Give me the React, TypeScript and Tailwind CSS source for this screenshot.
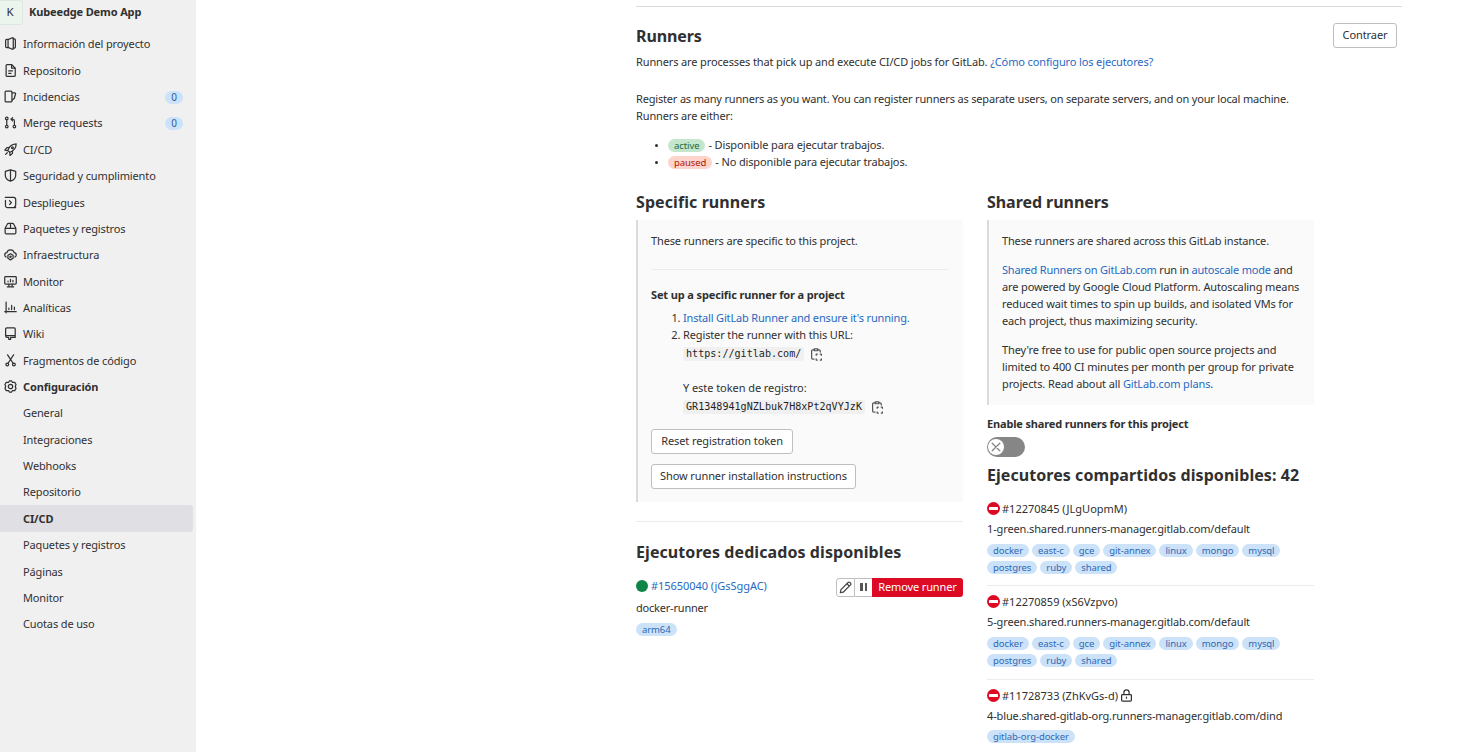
import React, { ReactNode } from "react";

function Icon({ children, className = "size-[13px]" }: { children: ReactNode; className?: string }) {
  return (
    <svg
      viewBox="0 0 16 16"
      className={`shrink-0 ${className}`}
      fill="none"
      stroke="currentColor"
      strokeWidth="1.5"
      strokeLinecap="round"
      strokeLinejoin="round"
    >
      {children}
    </svg>
  );
}

const icons = {
  project: (
    <>
      <path d="M5 3H3.2A1.2 1.2 0 0 0 2 4.2v7.6A1.2 1.2 0 0 0 3.2 13H5M11.400 2.400h1.400A1.200 1.200 0 0 1 14 3.600v8.800a1.200 1.200 0 0 1-1.200 1.200h-1.400" />
      <path d="M5 3.200 10.200 1q1.200-.4 1.200.7v12.600q0 1.100-1.200.7L5 12.800z" />
    </>
  ),
  doc: (
    <>
      <path d="M2.600 2v12a1.200 1.200 0 0 0 1.200 1.200h8.800a1.200 1.200 0 0 0 1.200-1.200V5.200L9.600.8H3.800A1.200 1.200 0 0 0 2.600 2z" />
      <path d="M9.400 1.200v4h4M5.800 8.500h4.600M5.800 11.600h2.800" />
    </>
  ),
  issues: (
    <>
      <rect x="1.400" y="1.400" width="8.400" height="13.200" rx="1.200" />
      <path d="M10 3.600h3.200a1 1 0 0 1 1 1.300l-1.600 5.600L10 12.400" />
    </>
  ),
  merge: (
    <>
      <circle cx="3.400" cy="3" r="1.600" />
      <circle cx="3.400" cy="13" r="1.600" />
      <circle cx="12.800" cy="13" r="1.600" />
      <path d="M3.400 4.800v6.400M12.800 11.200V6a2 2 0 0 0-2-2H9M10.600 2 8.600 4l2 2" />
    </>
  ),
  rocket: (
    <>
      <path d="M4.600 9.400C5.800 5 9.600 1.600 15 1.200c-.2 5.200-3.400 8.600-7.800 10.200z" />
      <path d="M6.200 5.800H3.600L1 8.800l3.600.6M10.400 10.200v2.600l-3 2.600-.4-4M4 12l-2 2" />
      <circle cx="10.400" cy="5.800" r="1.100" />
    </>
  ),
  shield: <path d="M8 1 1.600 3v4.600c0 3.800 2.600 6.100 6.400 7.400 3.800-1.300 6.400-3.600 6.400-7.400V3zM8 1v14" />,
  deploy: (
    <>
      <path d="M4 1.800h7.800a2.600 2.600 0 0 1 2.600 2.600V11a2.600 2.600 0 0 1-1.400 2.400M12 14.400H4.400a2.600 2.600 0 0 1-2.600-2.600V5.400M12 14.400h2.400M1.600 1.800H4" />
      <path d="m6.800 5.800 2.400 2.300-2.400 2.300" />
    </>
  ),
  pack: (
    <path d="M1.400 7.800h13.200v5.400a1.400 1.400 0 0 1-1.400 1.400H2.800a1.400 1.400 0 0 1-1.400-1.400zM1.400 7.800 4 2.800a2 2 0 0 1 1.800-1.200h4.400A2 2 0 0 1 12 2.800l2.600 5M8 1.800v5.800" />
  ),
  cloud: (
    <>
      <path d="M2.600 11.200A2.900 2.900 0 0 1 .9 8.600a2.900 2.900 0 0 1 2.700-2.800A4.500 4.500 0 0 1 8 2.200a4.500 4.500 0 0 1 4.400 3.600 2.900 2.900 0 0 1 2.700 2.800 2.900 2.900 0 0 1-1.700 2.600" />
      <path d="m8 7 3.200 1.900v3.800L8 14.600l-3.200-1.900V8.900z" />
      <circle cx="8" cy="10.800" r=".7" />
    </>
  ),
  monitor: (
    <>
      <rect x=".9" y="2" width="14.200" height="9.200" rx="1" />
      <path d="M6 11.400v2.800M10 11.400v2.800M4 14.600h8M5 7.600v.8M8 5.400v3M11 6.600v1.800" />
    </>
  ),
  chart: <path d="M2.600 1.400v13.200M1 13.200h14M6 8.800v1.800M9.400 5.400v5.200M12.800 7.400v3.200" />,
  book: (
    <path d="M4.400 12.800h-.6A1.800 1.800 0 0 1 2 11V2.600A1.600 1.600 0 0 1 3.600 1h9a1.200 1.200 0 0 1 1.200 1.200v10.600H9.600M2.200 11.600c.2-.6.800-.9 1.600-.9h10M5.800 12.800v2.400h2.400v-2.400" />
  ),
  scissors: (
    <>
      <circle cx="4" cy="13" r="1.700" />
      <circle cx="12.200" cy="13" r="1.700" />
      <path d="M5 11.400 11.800 1M11.200 11.400 4.400 1" />
    </>
  ),
  gear: (
    <>
      <path d="M6.600 1.200h2.800l.9 1.600 2.900.2 1.600 2.600-.9 2.400.9 2.400-1.600 2.600-2.900.2-.9 1.600H6.600l-.9-1.600-2.900-.2-1.600-2.600.9-2.400-.9-2.400L2.800 3l2.900-.2z" />
      <circle cx="8" cy="8" r="2.700" />
    </>
  ),
};

type NavItem = { label: string; icon?: keyof typeof icons; count?: number; bold?: boolean; active?: boolean };

const nav: NavItem[] = [
  { label: "Información del proyecto", icon: "project" },
  { label: "Repositorio", icon: "doc" },
  { label: "Incidencias", icon: "issues", count: 0 },
  { label: "Merge requests", icon: "merge", count: 0 },
  { label: "CI/CD", icon: "rocket" },
  { label: "Seguridad y cumplimiento", icon: "shield" },
  { label: "Despliegues", icon: "deploy" },
  { label: "Paquetes y registros", icon: "pack" },
  { label: "Infraestructura", icon: "cloud" },
  { label: "Monitor", icon: "monitor" },
  { label: "Analíticas", icon: "chart" },
  { label: "Wiki", icon: "book" },
  { label: "Fragmentos de código", icon: "scissors" },
  { label: "Configuración", icon: "gear", bold: true },
  { label: "General" },
  { label: "Integraciones" },
  { label: "Webhooks" },
  { label: "Repositorio" },
  { label: "CI/CD", bold: true, active: true },
  { label: "Paquetes y registros" },
  { label: "Páginas" },
  { label: "Monitor" },
  { label: "Cuotas de uso" },
];

function Sidebar() {
  return (
    <aside className="h-full w-[196px] shrink-0 overflow-hidden bg-[#f0f0f0]">
      <div className="flex h-[30.7px] items-start">
        <div className="flex h-[25px] w-[23px] items-center justify-center rounded-r-[3px] border border-l-0 border-[#dce8e0] bg-[#ecf4ee] pr-[2px] pb-[2px] text-[11.5px]">
          K
        </div>
        <span className="mt-[3px] ml-[6px] font-bold">Kubeedge Demo App</span>
      </div>
      <ul>
        {nav.map((item, i) => (
          <li
            key={i}
            className={`mr-[3px] flex h-[26.36px] items-center rounded-r-[3px] pr-[10px] pl-1 ${item.active ? "bg-[#dfdfe4]" : ""} ${item.bold ? "font-bold" : ""}`}
          >
            <span className="flex w-[19px] shrink-0">{item.icon && <Icon>{icons[item.icon]}</Icon>}</span>
            <span className="grow">{item.label}</span>
            {item.count !== undefined && (
              <span className="mt-[1px] h-[13px] w-[18px] rounded-full bg-[#cbe2f9] text-center text-[10px] leading-[13px] text-[#2f5ca0]">
                {item.count}
              </span>
            )}
          </li>
        ))}
      </ul>
    </aside>
  );
}

function Link({ children }: { children: ReactNode }) {
  return (
    <a href="#" className="text-[#1f69c1]">
      {children}
    </a>
  );
}

function Heading({ children, className }: { children: ReactNode; className: string }) {
  return <h4 className={`text-[16px] leading-[20px] font-bold ${className}`}>{children}</h4>;
}

function Badge({ children, className = "bg-[#cbe2f9] text-[#2f68b4]" }: { children: ReactNode; className?: string }) {
  return (
    <span className={`flex h-[13px] items-center rounded-full px-[6px] text-[9.5px] leading-[13px] tracking-[-0.09px] ${className}`}>
      {children}
    </span>
  );
}

function Button({ children, className = "" }: { children: ReactNode; className?: string }) {
  return (
    <button
      className={`flex h-[25px] items-center justify-center rounded-[3px] border border-[#bfbfbf] bg-white pb-[2px] tracking-[-0.09px] ${className}`}
    >
      {children}
    </button>
  );
}

function CopyIcon() {
  return (
    <Icon className="size-[13px] text-[#555]">
      <path d="M5 13.600H3.400A1.400 1.400 0 0 1 2 12.200V3.600a1.400 1.400 0 0 1 1.400-1.400H5M9.800 2.200h1.400a1.400 1.400 0 0 1 1.400 1.400V5" />
      <path d="M5.200 1h4.400v2.400H5.200z" />
      <path d="M7.600 9V7.600H9M12.600 7.600H14V9M14 13.400v1.400h-1.400M9 14.800H7.600v-1.400" />
    </Icon>
  );
}

function Code({ children }: { children: ReactNode }) {
  return (
    <div className="mt-[2px] flex h-[18px] items-center">
      <code className="mr-[6px] rounded-[3px] bg-[#f0f0f0] px-[3px] font-['DejaVu_Sans_Mono',monospace] text-[10.08px] leading-[14px] tracking-normal text-[#1f1f1f]">
        {children}
      </code>
      <CopyIcon />
    </div>
  );
}

function SpecificRunners() {
  return (
    <section className="w-[327px]">
      <Heading className="mb-[8px] tracking-[0.08px]">Specific runners</Heading>
      <div className="h-[282px] border-l-2 border-[#dbdbdb] bg-[#fafafa] pt-[11.5px] pr-[14px] pl-[13px]">
        <p>These runners are specific to this project.</p>
        <hr className="mt-[20.5px] mb-[16px] border-[#ececec]" />
        <p className="font-bold">Set up a specific runner for a project</p>
        <ol className="mt-[6px] ml-8 list-outside list-decimal">
          <li className="tracking-[-0.17px]">
            <Link>Install GitLab Runner and ensure it's running.</Link>
          </li>
          <li>
            Register the runner with this URL:
            <Code>https://gitlab.com/</Code>
            <p className="mt-[16px] tracking-[-0.06px]">Y este token de registro:</p>
            <Code>GR1348941gNZLbuk7H8xPt2qVYJzK</Code>
          </li>
        </ol>
        <Button className="mt-[13px] w-[142px]">Reset registration token</Button>
        <Button className="mt-[10px] w-[205px]">Show runner installation instructions</Button>
      </div>
      <hr className="mt-[19px] mb-[20px] border-[#ececec]" />
      <Heading className="tracking-[0.08px]">Ejecutores dedicados disponibles</Heading>
      <div className="mt-[15px] flex h-[20px] items-center">
        <div className="mb-[3px] flex grow items-center tracking-[-0.05px]">
          <span className="mr-[3px] size-[12px] rounded-full bg-[#108548]" />
          <Link>#15650040 (jGsSggAC)</Link>
        </div>
        <div className="flex h-[19px] items-stretch">
          <button className="flex w-[19px] items-center justify-center rounded-l-[3px] border border-[#bfbfbf] text-[#444]">
            <Icon>
              <path d="M1.600 14.400 2.400 10.600 11.200 1.800a1.600 1.600 0 0 1 2.200 0l.8.8a1.600 1.600 0 0 1 0 2.200L5.400 13.600zM9.800 3.400l2.800 2.800" />
            </Icon>
          </button>
          <button className="flex w-[17px] items-center justify-center gap-[2px] border-y border-[#bfbfbf]">
            <span className="h-[8px] w-[2.5px] bg-[#555]" />
            <span className="h-[8px] w-[2.5px] bg-[#555]" />
          </button>
          <button className="w-[91px] rounded-r-[3px] bg-[#dd0a24] pb-[1px] text-white">Remove runner</button>
        </div>
      </div>
      <p className="mt-[2px] tracking-[-0.2px]">docker-runner</p>
      <div className="mt-[6.5px] flex">
        <Badge>arm64</Badge>
      </div>
    </section>
  );
}

type Runner = { id: string; host: string; tags: string[][]; locked?: boolean };

const commonTags = [
  ["docker", "east-c", "gce", "git-annex", "linux", "mongo", "mysql"],
  ["postgres", "ruby", "shared"],
];

const runners: Runner[] = [
  { id: "#12270845 (JLgUopmM)", host: "1-green.shared.runners-manager.gitlab.com/default", tags: commonTags },
  { id: "#12270859 (xS6Vzpvo)", host: "5-green.shared.runners-manager.gitlab.com/default", tags: commonTags },
  {
    id: "#11728733 (ZhKvGs-d)",
    host: "4-blue.shared-gitlab-org.runners-manager.gitlab.com/dind",
    tags: [["gitlab-org-docker"]],
    locked: true,
  },
];

function RunnerRow({ runner }: { runner: Runner }) {
  return (
    <li className="h-[93.4px] border-b border-[#ececec] pt-[7px]">
      <div className="flex h-[17px] items-center tracking-[0px]">
        <svg viewBox="0 0 13 13" className="mr-[2px] size-[13px]">
          <circle cx="6.5" cy="6.5" r="6.500" fill="#dd0a24" />
          <rect x="2" y="5" width="9" height="3" rx=".6" fill="#fff" />
        </svg>
        {runner.id}
        {runner.locked && (
          <Icon className="ml-[2px] size-[13px]">
            <rect x="2" y="6.800" width="12" height="8" rx="1" />
            <path d="M4.800 6.600V4.200a3.200 3.200 0 0 1 6.400 0v2.400M8 10v1.400" />
          </Icon>
        )}
      </div>
      <p className="mt-[3px]">{runner.host}</p>
      <div className="mt-[6.5px] flex flex-col gap-[4px]">
        {runner.tags.map((row, i) => (
          <div key={i} className="flex gap-[3px]">
            {row.map((tag) => (
              <Badge key={tag}>{tag}</Badge>
            ))}
          </div>
        ))}
      </div>
    </li>
  );
}

function SharedRunners() {
  return (
    <section className="w-[327px]">
      <Heading className="mb-[8px] tracking-[-0.05px]">Shared runners</Heading>
      <div className="h-[185px] border-l-2 border-[#dbdbdb] bg-[#fafafa] pt-[11.5px] pl-[13px]">
        <p className="tracking-[-0.16px]">These runners are shared across this GitLab instance.</p>
        <p className="mt-[12px]">
          <span className="tracking-[-0.2px]">
            <Link>Shared Runners on GitLab.com</Link> run in <Link>autoscale mode</Link> and
          </span>
          <br />
          are powered by Google Cloud Platform. Autoscaling means
          <br />
          reduced wait times to spin up builds, and isolated VMs for
          <br />
          each project, thus maximizing security.
        </p>
        <p className="mt-[12px] tracking-[-0.12px]">
          They're free to use for public open source projects and
          <br />
          limited to 400 CI minutes per month per group for private
          <br />
          projects. Read about all <Link>GitLab.com plans</Link>.
        </p>
      </div>
      <p className="mt-[10px] font-bold tracking-[-0.16px]">Enable shared runners for this project</p>
      <button className="mt-[5px] flex h-[20px] w-[38px] items-center rounded-full bg-[#868686] pl-[1px]">
        <span className="flex size-[16px] items-center justify-center rounded-full bg-white text-[#868686]">
          <svg viewBox="0 0 10 10" className="size-[10px]" fill="none" stroke="currentColor" strokeWidth="1.3" strokeLinecap="round">
            <path d="m1.200 1.200 7.600 7.600M8.800 1.200 1.200 8.800" />
          </svg>
        </span>
      </button>
      <Heading className="mt-[8px] tracking-[0.06px]">Ejecutores compartidos disponibles: 42</Heading>
      <ul className="mt-[8px]">
        {runners.map((r) => (
          <RunnerRow key={r.id} runner={r} />
        ))}
      </ul>
    </section>
  );
}

function StatusItem({ children }: { children: ReactNode }) {
  return (
    <li className="flex h-[17px] items-center">
      <span className="mt-[2px] mr-[10px] ml-[19px] size-[3px] rounded-full bg-[#303030]" />
      {children}
    </li>
  );
}

export default function App() {
  return (
    <div className="flex h-[752px] w-[1480px] overflow-hidden bg-white font-['Noto_Sans',sans-serif] text-[11px] leading-[17px] tracking-[-0.13px] whitespace-nowrap text-[#303030]">
      <Sidebar />
      <main className="ml-[440px] w-[766px] pt-[6px]">
        <div className="flex h-[47px] items-start justify-between border-t border-[#dbdbdb] pt-[16px] pr-[5px]">
          <Heading className="mt-[3px] tracking-[-0.1px]">Runners</Heading>
          <Button className="w-[64px]">Contraer</Button>
        </div>
        <p>
          Runners are processes that pick up and execute CI/CD jobs for GitLab. <Link>¿Cómo configuro los ejecutores?</Link>
        </p>
        <p className="mt-[20px]">
          <span className="tracking-[-0.18px]">
            Register as many runners as you want. You can register runners as separate users, on separate servers, and on your local machine.
          </span>
          <br />
          Runners are either:
        </p>
        <ul className="mt-[12px]">
          <StatusItem>
            <Badge className="mt-[2px] mr-[3px] bg-[#c3e6cd] text-[#24663b]">active</Badge>- Disponible para ejecutar trabajos.
          </StatusItem>
          <StatusItem>
            <Badge className="mt-[2px] mr-[3px] bg-[#fdd4cd] text-[#ae1800]">paused</Badge>- No disponible para ejecutar trabajos.
          </StatusItem>
        </ul>
        <div className="mt-[22px] flex gap-[24px]">
          <SpecificRunners />
          <SharedRunners />
        </div>
      </main>
    </div>
  );
}
